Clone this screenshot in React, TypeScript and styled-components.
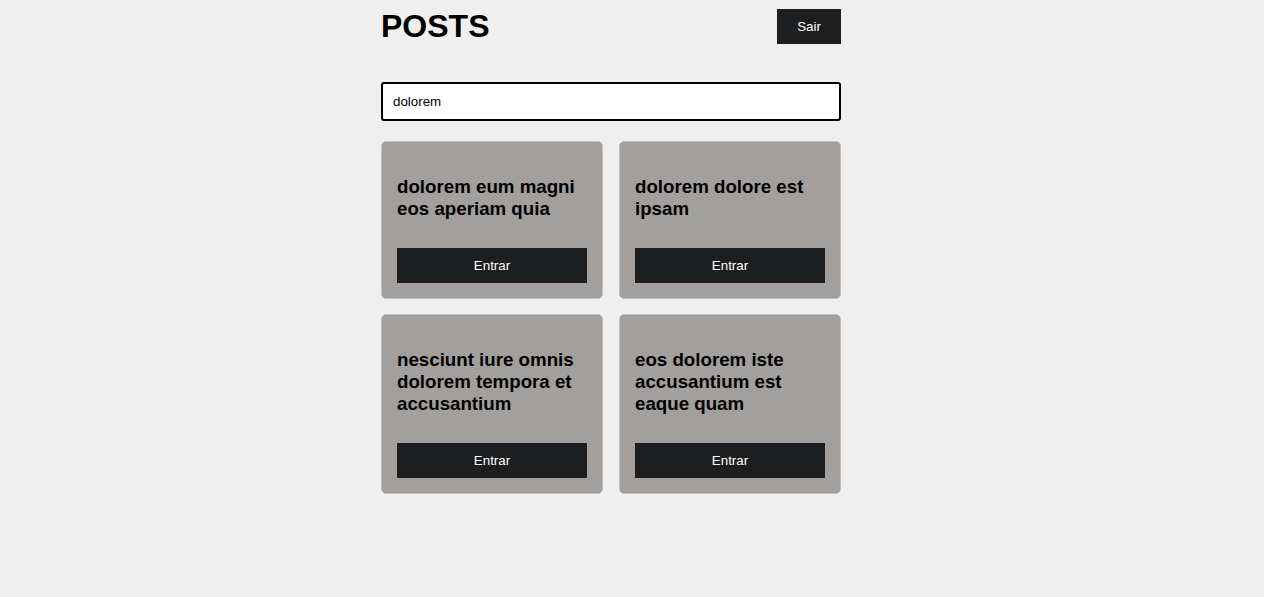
import React, { useState } from 'react';
import styled, { createGlobalStyle } from 'styled-components';

const posts = [
  { id: 1, title: 'dolorem eum magni eos aperiam quia' },
  { id: 2, title: 'dolorem dolore est ipsam' },
  { id: 3, title: 'nesciunt iure omnis dolorem tempora et accusantium' },
  { id: 4, title: 'eos dolorem iste accusantium est eaque quam' },
];

function App() {
  const [search, setSearch] = useState('dolorem');

  return (
    <>
      <GlobalStyle />
      <Container>
        <Header>
          <Title>POSTS</Title>
          <DarkButton>Sair</DarkButton>
        </Header>
        <SearchInput
          autoFocus
          value={search}
          onChange={(e) => setSearch(e.target.value)}
        />
        <PostGrid>
          {posts.map((post) => (
            <PostCard key={post.id}>
              <PostTitle>{post.title}</PostTitle>
              <DarkButton $full>Entrar</DarkButton>
            </PostCard>
          ))}
        </PostGrid>
      </Container>
    </>
  );
}

export default App;

const GlobalStyle = createGlobalStyle`
  html, body {
    margin: 0;
    background-color: #efefef;
    font-family: "Liberation Sans", Arial, sans-serif;
  }
`

const Container = styled.main`
  width: 460px;
  margin-left: calc(50% - 251px);
  padding-top: 8px;
`

const Header = styled.header`
  display: flex;
  justify-content: space-between;
  align-items: center;
  margin-bottom: 37px;
`

const Title = styled.h1`
  margin: 0;
  font-size: 32px;
  font-weight: bold;
  color: #000;
`

const DarkButton = styled.button<{ $full?: boolean }>`
  width: ${(p) => (p.$full ? '100%' : '64px')};
  height: 35px;
  border: none;
  outline: none;
  background-color: #1d1e20;
  color: #fff;
  font-family: "Liberation Sans", Arial, sans-serif;
  font-size: 13.33px;
  cursor: pointer;
`

const SearchInput = styled.input`
  display: block;
  box-sizing: border-box;
  width: 100%;
  height: 39px;
  padding: 0 10px;
  border: 2px solid #000;
  border-radius: 3px;
  outline: none;
  background: #fff;
  color: #000;
  font-family: "Liberation Sans", Arial, sans-serif;
  font-size: 13.33px;
  margin-bottom: 20px;
`

const PostGrid = styled.div`
  display: grid;
  grid-template-columns: 1fr 1fr;
  column-gap: 16px;
  row-gap: 15px;
`

const PostCard = styled.div`
  display: flex;
  flex-direction: column;
  padding: 15px;
  background-color: #a29f9d;
  border: 1px solid #c2bfbe;
  border-radius: 5px;
`

const PostTitle = styled.h3`
  margin: 19px 0 28px;
  font-size: 18.72px;
  line-height: 22px;
  font-weight: bold;
  color: #000;
`
